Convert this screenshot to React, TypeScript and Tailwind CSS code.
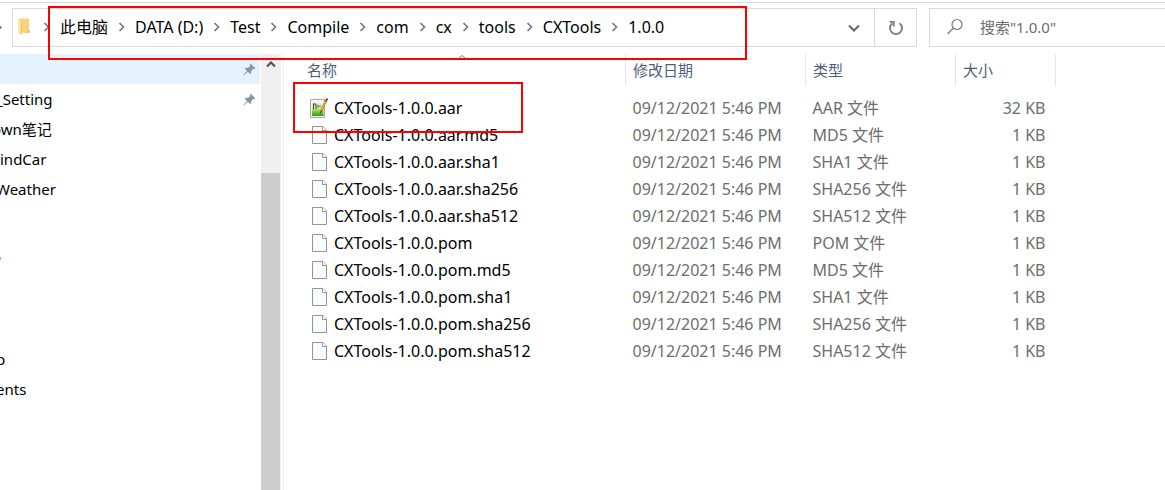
import { Fragment } from "react";

interface FileRow { name: string; date: string; type: string; size: string; kind?: "aar"; }
interface NavItem { label: string; cls: string; pinned?: boolean; active?: boolean; }

const crumbs = ["此电脑", "DATA (D:)", "Test", "Compile", "com", "cx", "tools", "CXTools", "1.0.0"];

const DATE = "09/12/2021 5:46 PM";

const files: FileRow[] = [
  { name: "CXTools-1.0.0.aar", date: DATE, type: "AAR 文件", size: "32 KB", kind: "aar" },
  { name: "CXTools-1.0.0.aar.md5", date: DATE, type: "MD5 文件", size: "1 KB" },
  { name: "CXTools-1.0.0.aar.sha1", date: DATE, type: "SHA1 文件", size: "1 KB" },
  { name: "CXTools-1.0.0.aar.sha256", date: DATE, type: "SHA256 文件", size: "1 KB" },
  { name: "CXTools-1.0.0.aar.sha512", date: DATE, type: "SHA512 文件", size: "1 KB" },
  { name: "CXTools-1.0.0.pom", date: DATE, type: "POM 文件", size: "1 KB" },
  { name: "CXTools-1.0.0.pom.md5", date: DATE, type: "MD5 文件", size: "1 KB" },
  { name: "CXTools-1.0.0.pom.sha1", date: DATE, type: "SHA1 文件", size: "1 KB" },
  { name: "CXTools-1.0.0.pom.sha256", date: DATE, type: "SHA256 文件", size: "1 KB" },
  { name: "CXTools-1.0.0.pom.sha512", date: DATE, type: "SHA512 文件", size: "1 KB" },
];

// the pane is scrolled sideways, so labels run off its left edge
const pinnedItems: NavItem[] = [
  { label: "", cls: "", pinned: true, active: true },
  { label: "_Setting", cls: "-ml-1", pinned: true },
  { label: "own笔记", cls: "-ml-2" },
  { label: "indCar", cls: "" },
  { label: "Weather", cls: "-ml-1" },
];

const pcItems: NavItem[] = [
  { label: "p", cls: "-ml-1" },
  { label: "ents", cls: "-ml-1" },
];

function Chevron() {
  return (
    <svg className="w-[27px] h-4 shrink-0" viewBox="0 0 27 16" fill="none" stroke="#7a7a7a" strokeWidth="1.7">
      <path d="M11.5 4 L15.5 8 L11.5 12" />
    </svg>
  );
}

function FolderIcon() {
  return (
    <svg className="w-4 h-[18px] shrink-0" viewBox="0 0 16 18">
      <path d="M2 .5h10v12l1 .5v2H2z" fill="#f5d47c" />
      <path d="M10.500 11.500l2.500 1v2.500h-3z" fill="#eec668" />
      <path d="M1 .5l3 2.500v14.500L1 15z" fill="#fce5a2" />
      <path d="M4 3v14.500l.8-2.500V3z" fill="#eac165" />
    </svg>
  );
}

function PinIcon() {
  return (
    <svg className="w-[13px] h-[13px] shrink-0" viewBox="0 0 13 13" fill="#8795a3">
      <path d="M7.600.6 L12.400 5.400 L11.300 6.200 L10.300 5.800 L8.300 7.900 L8.200 10.300 L7.300 11.100 L4.800 8.700 L.9 12.400 L.4 12 L4 7.900 L1.800 5.700 L2.700 4.800 L5.200 4.700 L7.300 2.700 L6.900 1.500 Z" />
    </svg>
  );
}

function FileIcon() {
  return (
    <svg className="w-5 h-5 shrink-0" viewBox="0 0 20 20">
      <path d="M4.500 1.500H15L18.500 5V18.500H4.500Z" fill="#f9fafa" stroke="#949494" />
      <path d="M14.500 1.500V5.500H18.500" fill="#fff" stroke="#949494" />
    </svg>
  );
}

function AarIcon() {
  return (
    <svg className="w-5 h-5 shrink-0" viewBox="0 0 20 20">
      <defs>
        <linearGradient id="aar" x1="0" y1="0" x2="0" y2="1">
          <stop offset="0" stopColor="#eef3ea" />
          <stop offset=".4" stopColor="#d3eab0" />
          <stop offset=".65" stopColor="#86d43c" />
          <stop offset="1" stopColor="#2f9a10" />
        </linearGradient>
      </defs>
      <path d="M2.500 1.500H16.500V19.500H2.500Z" fill="#f4f4f4" stroke="#a3a9a3" />
      <path d="M4 4H15.500V18H4Z" fill="url(#aar)" />
      <path d="M3 1h2M7 1h2M11 1h2" stroke="#c9cdd0" />
      <path d="M5.500 5.500v5.500M5.500 6h2.500v5M10 7v2.500M12 7.500v1.500" fill="none" stroke="#3c4a35" />
      <path d="M18 2.500L13 13.500" stroke="#b98227" strokeWidth="2.400" />
      <path d="M17.700 2.700L13 12.800" stroke="#f3bb4b" />
      <path d="M19.300 .5L17.700 3.500" stroke="#8d4a4a" strokeWidth="2.200" />
      <path d="M13.500 12.500L12 15.500" stroke="#4a3a20" />
    </svg>
  );
}

function NavRow({ item }: { item: NavItem }) {
  return (
    <a href="#" className={`flex items-center h-[30px] pr-1 ${item.active ? "bg-[#e5f3ff]" : ""}`}>
      <span className={`flex-1 whitespace-nowrap ${item.cls}`}>{item.label}</span>
      {item.pinned && <PinIcon />}
    </a>
  );
}

export default function App() {
  const thCls = "h-8 pl-[7px] text-left font-normal border-r border-[#e5e5e5]";

  return (
    <div className="min-h-screen flex flex-col overflow-hidden bg-white text-black text-[15px] leading-5 font-['Noto_Sans','Noto_Sans_CJK_SC',sans-serif]">
      {/* Address bar */}
      <header className="flex pt-[5px] pb-[7px] mt-[2px] border-t border-[#d9d9d9]">
        <svg className="w-3 h-[39px] shrink-0" viewBox="0 0 12 39">
          <path d="M0 17.500l2 2-2 2z" fill="#7a7a7a" />
        </svg>
        <div className="relative flex flex-1 h-[39px] border border-[#d9d9d9]">
          <nav className="flex flex-1 items-center pl-1 pb-[2px] text-[16px]">
            <FolderIcon />
            <Chevron />
            {crumbs.map((c, i) => (
              <Fragment key={c}>
                {i > 0 && <Chevron />}
                <button className="whitespace-nowrap">{c}</button>
              </Fragment>
            ))}
          </nav>
          <button aria-label="Previous locations" className="w-10 flex items-center justify-center">
            <svg className="w-3 h-3" viewBox="0 0 12 12" fill="none" stroke="#666" strokeWidth="2"><path d="M1 3.500l5 5 5-5" /></svg>
          </button>
          <button aria-label="Refresh" className="w-[42px] flex items-center justify-center border-l border-[#d9d9d9]">
            <svg className="w-4 h-4" viewBox="0 0 16 16" fill="none" stroke="#808080" strokeWidth="2">
              <path d="M4.500 3.200A6 6 0 1 0 11.500 3.200" />
              <path d="M1.500 1.800H5.800V6.500" strokeWidth="1.800" />
            </svg>
          </button>
          <div className="absolute left-[35px] -top-[3px] w-[699px] h-[54px] border-2 border-[#ff0000] pointer-events-none z-10" />
        </div>
        <label className="flex items-center w-[236px] ml-3 pl-4 pb-[2px] gap-4 border border-r-0 border-[#d9d9d9]">
          <svg className="w-[18px] h-[18px] shrink-0" viewBox="0 0 18 18" fill="none" stroke="#7a7a7a" strokeWidth="1.200">
            <circle cx="11" cy="6.500" r="5" />
            <path d="M7.500 10L1.500 16" />
          </svg>
          <input type="text" aria-label="搜索" placeholder={'搜索"1.0.0"'} className="w-full min-w-0 outline-none placeholder:text-[#6d6d6d]" />
        </label>
      </header>

      <div className="flex flex-1">
        {/* Navigation pane */}
        <nav className="w-[260px] shrink-0 overflow-hidden">
          {pinnedItems.map(item => <NavRow key={item.label} item={item} />)}
          <div className="h-[140px] pt-[53px]">
            <div className="w-px h-[3px] bg-[#6dbcf5]" />
          </div>
          {pcItems.map(item => <NavRow key={item.label} item={item} />)}
        </nav>
        <div className="w-5 shrink-0 ml-px flex flex-col bg-[#f0f0f0]">
          <button aria-label="Scroll up" className="h-5 flex items-center justify-center">
            <svg className="w-3 h-3" viewBox="0 0 12 12" fill="none" stroke="#505050" strokeWidth="2"><path d="M2 8.500l4-4 4 4" /></svg>
          </button>
          <div className="flex-1 mt-[99px] mr-px bg-[#cdcdcd]" />
        </div>

        {/* File list */}
        <main className="flex-1 ml-[2px] border-l border-[#f2f2f2]">
          <table className="table-fixed w-[772px] text-[#6d6d6d]">
            <colgroup>
              <col />
              <col className="w-[180px]" />
              <col className="w-[150px]" />
              <col className="w-[100px]" />
            </colgroup>
            <thead className="text-[#4c607a]">
              <tr>
                <th className="relative h-8 pl-[23px] text-left font-normal border-r border-[#e5e5e5]">
                  名称
                  <svg className="absolute left-[174px] top-0 w-2 h-[5px]" viewBox="0 0 8 5" fill="none" stroke="#7a7a7a"><path d="M.5 4.500l3.500-3 3.500 3" /></svg>
                </th>
                <th className={thCls}>修改日期</th>
                <th className={thCls}>类型</th>
                <th className={thCls}>大小</th>
              </tr>
            </thead>
            <tbody className="text-[16px] before:block before:h-2 before:content-['']">
              {files.map(f => (
                <tr key={f.name} className="h-[27px]">
                  <td className="relative p-0 pl-6 text-black">
                    <div className="flex items-center gap-[6px]">
                      {f.kind === "aar" ? <AarIcon /> : <FileIcon />}
                      <span className="whitespace-nowrap">{f.name}</span>
                    </div>
                    {f.kind === "aar" && (
                      <div className="absolute left-[9px] -top-3 w-[230px] h-[51px] border-2 border-[#ff0000] pointer-events-none z-10" />
                    )}
                  </td>
                  <td className="p-0 pl-[7px]">{f.date}</td>
                  <td className="p-0 pl-[7px]">{f.type}</td>
                  <td className="p-0 pr-[10px] text-right">{f.size}</td>
                </tr>
              ))}
            </tbody>
          </table>
        </main>
      </div>
    </div>
  );
}
